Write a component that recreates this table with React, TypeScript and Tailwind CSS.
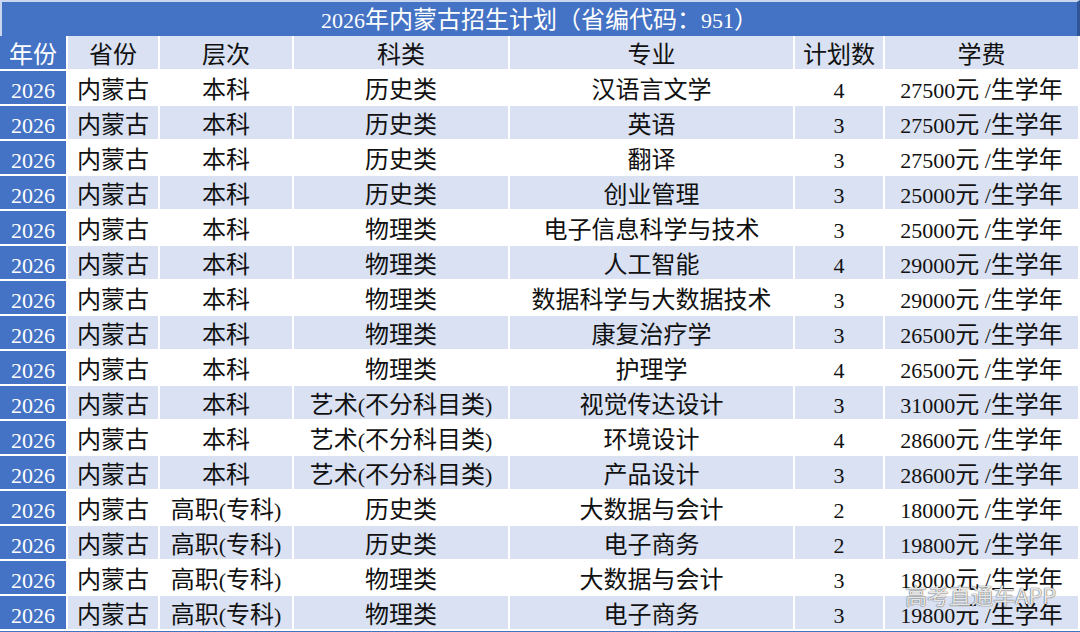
import React from "react"

const rows: [string, string, string, string, string, string][] = [
  ["内蒙古", "本科", "历史类", "汉语言文学", "4", "27500元 /生学年"],
  ["内蒙古", "本科", "历史类", "英语", "3", "27500元 /生学年"],
  ["内蒙古", "本科", "历史类", "翻译", "3", "27500元 /生学年"],
  ["内蒙古", "本科", "历史类", "创业管理", "3", "25000元 /生学年"],
  ["内蒙古", "本科", "物理类", "电子信息科学与技术", "3", "25000元 /生学年"],
  ["内蒙古", "本科", "物理类", "人工智能", "4", "29000元 /生学年"],
  ["内蒙古", "本科", "物理类", "数据科学与大数据技术", "3", "29000元 /生学年"],
  ["内蒙古", "本科", "物理类", "康复治疗学", "3", "26500元 /生学年"],
  ["内蒙古", "本科", "物理类", "护理学", "4", "26500元 /生学年"],
  ["内蒙古", "本科", "艺术(不分科目类)", "视觉传达设计", "3", "31000元 /生学年"],
  ["内蒙古", "本科", "艺术(不分科目类)", "环境设计", "4", "28600元 /生学年"],
  ["内蒙古", "本科", "艺术(不分科目类)", "产品设计", "3", "28600元 /生学年"],
  ["内蒙古", "高职(专科)", "历史类", "大数据与会计", "2", "18000元 /生学年"],
  ["内蒙古", "高职(专科)", "历史类", "电子商务", "2", "19800元 /生学年"],
  ["内蒙古", "高职(专科)", "物理类", "大数据与会计", "3", "18000元 /生学年"],
  ["内蒙古", "高职(专科)", "物理类", "电子商务", "3", "19800元 /生学年"],
]

const headers = ["省份", "层次", "科类", "专业", "计划数", "学费"]

// latin runs a bit smaller than the CJK glyphs, like the source sheet
function Mixed({ text }: { text: string }) {
  const parts = text.split(/([\x20-\x7e]+)/).filter(Boolean)
  return (
    <>
      {parts.map((p, i) =>
        /^[\x20-\x7e]+$/.test(p) ? (
          <span key={i} className="text-[22px] whitespace-pre">{p}</span>
        ) : (
          <span key={i}>{p}</span>
        )
      )}
    </>
  )
}

const cell = "flex items-center justify-center whitespace-nowrap pt-[5px] border-r-2 border-b-2 border-white"

export default function App() {
  return (
    <div
      className="relative w-[1080px] h-[632px] overflow-hidden bg-white text-[24px] text-[#111]"
      style={{ fontFamily: '"Liberation Serif", "Noto Sans CJK SC", serif' }}
    >
      <div className="h-[36px] pt-[2px] border-t-2 border-l-2 border-[#c9d6ee] bg-[#4472c4] border-r-[3px] border-r-[#2f5597] flex items-center justify-center text-white">
        <Mixed text="2026" />年内蒙古招生计划（省编代码：<Mixed text="951" />）
      </div>

      <div className="grid grid-cols-[68px_92px_134px_216px_285px_90px_195px] auto-rows-[35px] bg-white border-b-2 border-[#4472c4]">
        <div className={`${cell} bg-[#4472c4] text-white`}>年份</div>
        {headers.map((h) => (
          <div key={h} className={`${cell} bg-[#d9e1f2]`}>
            {h}
          </div>
        ))}

        {rows.map((r, i) => (
          <React.Fragment key={i}>
            <div className={`${cell} bg-[#4472c4] text-white`}>
              <Mixed text="2026" />
            </div>
            {r.map((c, j) => (
              <div key={j} className={`${cell} ${i % 2 === 1 ? "bg-[#d9e1f2]" : "bg-white"}`}>
                <Mixed text={c} />
              </div>
            ))}
          </React.Fragment>
        ))}
      </div>

      {/* watermark */}
      <span
        className="absolute left-[905px] top-[578px] text-[22px] text-white/85 [text-shadow:0_0_1px_#555,0_0_1px_#555]"
        style={{ fontFamily: '"Noto Sans CJK SC", sans-serif' }}
      >
        高考直通车APP
      </span>
    </div>
  )
}
